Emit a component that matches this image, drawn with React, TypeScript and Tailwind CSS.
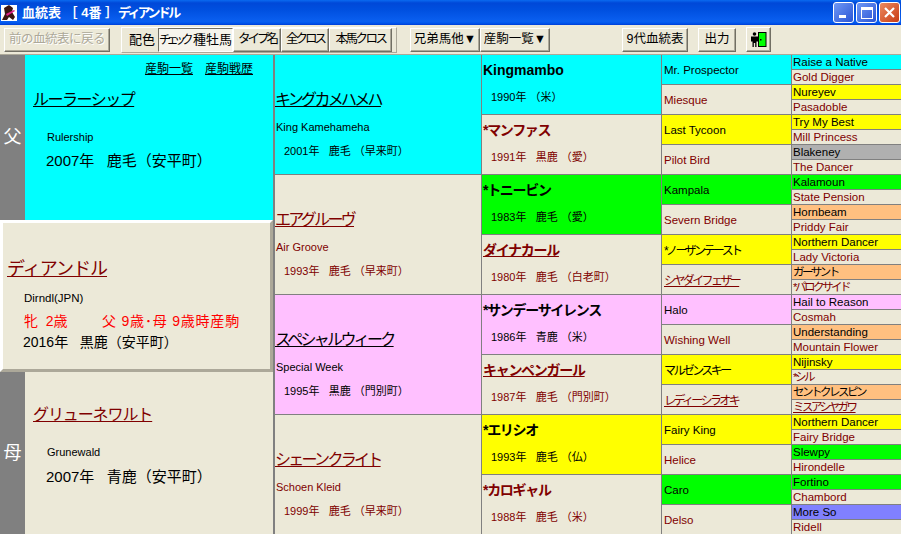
import React from "react";

const font = "font-['Liberation_Sans','Noto_Sans_CJK_JP',sans-serif]";

const bgs: Record<string, string> = {
  c: "bg-[#00ffff]",
  y: "bg-[#ffff00]",
  g: "bg-[#00ff00]",
  p: "bg-[#ffc0ff]",
  o: "bg-[#ffc080]",
  s: "bg-[#b0b0b0]",
  b: "bg-[#8080ff]",
  n: "bg-[#ece9d8]",
};

type Horse = { name: string; bg: string; link?: boolean; sub?: string; data?: string };

const gen2: Horse[] = [
  { name: "キングカメハメハ", bg: "c", link: true, sub: "King Kamehameha", data: "2001年   鹿毛 （早来町）" },
  { name: "エアグルーヴ", bg: "n", link: true, sub: "Air Groove", data: "1993年   鹿毛 （早来町）" },
  { name: "スペシャルウィーク", bg: "p", link: true, sub: "Special Week", data: "1995年   黒鹿 （門別町）" },
  { name: "シェーンクライト", bg: "n", link: true, sub: "Schoen Kleid", data: "1999年   鹿毛 （早来町）" },
];

const gen3: Horse[] = [
  { name: "Kingmambo", bg: "c", data: "1990年 （米）" },
  { name: "*マンファス", bg: "n", data: "1991年   黒鹿 （愛）" },
  { name: "*トニービン", bg: "g", data: "1983年   鹿毛 （愛）" },
  { name: "ダイナカール", bg: "n", link: true, data: "1980年   鹿毛 （白老町）" },
  { name: "*サンデーサイレンス", bg: "p", data: "1986年   青鹿 （米）" },
  { name: "キャンペンガール", bg: "n", link: true, data: "1987年   鹿毛 （門別町）" },
  { name: "*エリシオ", bg: "y", data: "1993年   鹿毛 （仏）" },
  { name: "*カロギャル", bg: "n", data: "1988年   鹿毛 （米）" },
];

const gen4: Horse[] = [
  { name: "Mr. Prospector", bg: "c" },
  { name: "Miesque", bg: "n" },
  { name: "Last Tycoon", bg: "y" },
  { name: "Pilot Bird", bg: "n" },
  { name: "Kampala", bg: "g" },
  { name: "Severn Bridge", bg: "n" },
  { name: "*ノーザンテースト", bg: "y" },
  { name: "シヤダイフェザー", bg: "n", link: true },
  { name: "Halo", bg: "p" },
  { name: "Wishing Well", bg: "n" },
  { name: "マルゼンスキー", bg: "y" },
  { name: "レディーシラオキ", bg: "n", link: true },
  { name: "Fairy King", bg: "y" },
  { name: "Helice", bg: "n" },
  { name: "Caro", bg: "g" },
  { name: "Delso", bg: "n" },
];

const gen5: Horse[] = [
  { name: "Raise a Native", bg: "c" },
  { name: "Gold Digger", bg: "n" },
  { name: "Nureyev", bg: "y" },
  { name: "Pasadoble", bg: "n" },
  { name: "Try My Best", bg: "y" },
  { name: "Mill Princess", bg: "n" },
  { name: "Blakeney", bg: "s" },
  { name: "The Dancer", bg: "n" },
  { name: "Kalamoun", bg: "g" },
  { name: "State Pension", bg: "n" },
  { name: "Hornbeam", bg: "o" },
  { name: "Priddy Fair", bg: "n" },
  { name: "Northern Dancer", bg: "y" },
  { name: "Lady Victoria", bg: "n" },
  { name: "ガーサント", bg: "o" },
  { name: "*パロクサイド", bg: "n" },
  { name: "Hail to Reason", bg: "p" },
  { name: "Cosmah", bg: "n" },
  { name: "Understanding", bg: "o" },
  { name: "Mountain Flower", bg: "n" },
  { name: "Nijinsky", bg: "y" },
  { name: "*シル", bg: "n" },
  { name: "セントクレスピン", bg: "o" },
  { name: "ミスアシヤガワ", bg: "n", link: true },
  { name: "Northern Dancer", bg: "y" },
  { name: "Fairy Bridge", bg: "n" },
  { name: "Slewpy", bg: "g" },
  { name: "Hirondelle", bg: "n" },
  { name: "Fortino", bg: "g" },
  { name: "Chambord", bg: "n" },
  { name: "More So", bg: "b" },
  { name: "Ridell", bg: "n" },
];

function tone(h: Horse): string {
  return h.bg === "n" ? "text-[#800000]" : "text-black";
}

function ink(h: Horse): string {
  return h.link ? `${tone(h)} underline` : tone(h);
}

function isKana(s: string): boolean {
  return /[\u30a0-\u30ff]/.test(s);
}

const btn =
  "h-[24px] flex items-center justify-center whitespace-nowrap text-[12.5px] bg-[#ece9d8] border border-t-white border-l-white border-r-[#716f64] border-b-[#716f64] shadow-[inset_-1px_-1px_0_#aca899]";

function Toolbar() {
  return (
    <div className="h-[30px] flex items-center bg-[#ece9d8] border-b border-[#aca899]">
      <button className={`${btn} w-[106px] ml-[4px] text-[#aca899] tracking-[-0.5px] [text-shadow:1px_1px_0_#ffffff]`}>前の血統表に戻る</button>
      <div className="ml-[11px] h-[26px] w-[276px] flex items-center border border-t-white border-l-white border-r-[#aca899] border-b-[#aca899] pl-[7px]">
        <span className="w-[29px] text-[13px] whitespace-nowrap">配色</span>
        <button className="h-[24px] w-[75px] flex items-center justify-center whitespace-nowrap text-[13px] text-black bg-[#f6f4ec] border border-t-[#716f64] border-l-[#716f64] border-r-white border-b-white">
          <span className="text-[12px] tracking-[-4.5px] mr-[4px]">チェック</span>種牡馬
        </button>
        <button className={`${btn} w-[48px] text-black tracking-[-3px]`}>タイプ名</button>
        <button className={`${btn} w-[48px] text-black tracking-[-3px]`}>全クロス</button>
        <button className={`${btn} w-[63px] text-black tracking-[-2.5px]`}>本馬クロス</button>
      </div>
      <button className={`${btn} w-[70px] ml-[13px] text-black`}>兄弟馬他▼</button>
      <button className={`${btn} w-[70px] text-black`}>産駒一覧▼</button>
      <button className={`${btn} w-[66px] ml-[72px] text-black`}>9代血統表</button>
      <button className={`${btn} w-[38px] ml-[10px] text-black`}>出力</button>
      <button className={`${btn} w-[25px] h-[25px] ml-[10px]`}>
        <svg width="16" height="15" viewBox="0 0 16 15">
          <circle cx="3.5" cy="2" r="1.8" fill="#000" />
          <path d="M0 4.5h7v5H5.5V15h-1.300v-4h-1.400v4H1.500V9.500H0z" fill="#000" />
          <rect x="7.500" y="0.500" width="7.500" height="14" fill="#00ff00" stroke="#000" />
          <rect x="9" y="7" width="1.500" height="1.500" fill="#000" />
        </svg>
      </button>
    </div>
  );
}

function TitleBar() {
  return (
    <div className="h-[25px] flex items-center bg-[linear-gradient(180deg,#0a6af0_0%,#0048d8_12%,#0050e0_40%,#0a5ff0_85%,#0058ee_92%,#003dd7_100%)]">
      <svg className="ml-[1px]" width="16" height="16" viewBox="0 0 16 16">
        <rect width="16" height="16" fill="#ffffff" />
        <path d="M3 3l5-3 4 3-1 4 3 5-2 3-4-3-2 3H1l3-6z" fill="#3a1410" />
        <path d="M5 9l8-4 1 1-8 5z" fill="#e0208a" />
      </svg>
      <span className="ml-[5px] text-[13px] font-bold text-white whitespace-pre">
        血統表 ［ 4番 ］<span className="tracking-[-2.700px]">ディアンドル</span>
      </span>
      <div className="ml-auto mr-[1px] flex gap-[2px]">
        <div className="w-[21px] h-[21px] rounded-[3px] border border-white bg-[linear-gradient(135deg,#6f98f5,#2a55d5)] flex items-end pl-[5px] pb-[4px]">
          <div className="w-[7px] h-[3px] bg-white" />
        </div>
        <div className="w-[21px] h-[21px] rounded-[3px] border border-white bg-[linear-gradient(135deg,#6f98f5,#2a55d5)] flex items-center justify-center">
          <div className="w-[12px] h-[12px] border border-white border-t-[3px]" />
        </div>
        <div className="w-[21px] h-[21px] rounded-[3px] border border-white bg-[linear-gradient(135deg,#ec8a60,#c83c14)] flex items-center justify-center">
          <svg width="13" height="13" viewBox="0 0 13 13">
            <path d="M2 2l9 9M11 2l-9 9" stroke="#fff" strokeWidth="2.200" />
          </svg>
        </div>
      </div>
    </div>
  );
}

function ParentPanel({ label, h, children, bg }: { label: string; h: string; children: React.ReactNode; bg: string }) {
  return (
    <div className={`${h} flex`}>
      <div className="w-[25px] bg-[#808080] flex items-center justify-center text-[18px] text-white">{label}</div>
      <div className={`flex-1 ${bg}`}>{children}</div>
    </div>
  );
}

export default function App() {
  return (
    <div className={`w-[901px] h-[534px] overflow-hidden bg-[#ece9d8] ${font}`}>
      <TitleBar />
      <Toolbar />
      <div className="flex">
        {/* 本馬と両親 */}
        <div className="w-[275px] border-r-2 border-[#808080] flex flex-col">
          <ParentPanel label="父" h="h-[165px]" bg="bg-[#00ffff]">
            <div className="flex justify-end gap-[12px] pr-[20px] pt-[7px] text-[12px] leading-[14px] underline text-black">
              <span>産駒一覧</span>
              <span>産駒戦歴</span>
            </div>
            <div className="pl-[8px] mt-[13px] text-[16px] leading-[22px] underline text-black tracking-[-1.500px]">ルーラーシップ</div>
            <div className="pl-[22px] mt-[19px] text-[11px] leading-[14px] text-black">Rulership</div>
            <div className="pl-[21px] mt-[7px] text-[15px] leading-[20px] text-black whitespace-pre">2007年   鹿毛（安平町）</div>
          </ParentPanel>
          <div className="h-[152px] bg-[#ece9d8] border-[3px] border-t-white border-l-white border-r-[#aca899] border-b-[#aca899] pl-[4px]">
            <div className="mt-[33px] text-[18px] leading-[26px] underline text-[#800000] tracking-[-1px]">ディアンドル</div>
            <div className="mt-[8px] pl-[17px] text-[11.5px] leading-[16px] text-black">Dirndl(JPN)</div>
            <div className="mt-[6px] pl-[17px] flex text-[14px] leading-[18px] text-[#ff0000] whitespace-pre">
              <span className="w-[78px]">牝  2歳</span>
              <span className="tracking-[0.800px]">父 9歳･母 9歳時産駒</span>
            </div>
            <div className="mt-[2px] pl-[16px] text-[14px] leading-[20px] text-black whitespace-pre">2016年   黒鹿（安平町）</div>
          </div>
          <ParentPanel label="母" h="h-[162px]" bg="bg-[#ece9d8]">
            <div className="pl-[8px] mt-[32px] text-[16px] leading-[22px] underline text-[#800000] tracking-[-1.100px]">グリューネワルト</div>
            <div className="pl-[22px] mt-[19px] text-[11px] leading-[14px] text-black">Grunewald</div>
            <div className="pl-[21px] mt-[8px] text-[15px] leading-[20px] text-black whitespace-pre">2007年   青鹿（安平町）</div>
          </ParentPanel>
        </div>

        {/* 2代目から5代目 */}
        <div className="flex-1 flex">
          <div className="w-[206px]">
            {gen2.map((h) => (
              <div key={h.name} className={`h-[120px] border-b border-[#808080] ${bgs[h.bg]}`}>
                <div className={`pt-[34px] text-[16px] leading-[22px] tracking-[-2.700px] ${ink(h)}`}>{h.name}</div>
                <div className={`mt-[9px] pl-[1px] text-[11px] leading-[14px] ${tone(h)}`}>{h.sub}</div>
                <div className={`mt-[10px] pl-[9px] text-[11px] leading-[14px] whitespace-pre ${tone(h)}`}>{h.data}</div>
              </div>
            ))}
          </div>
          <div className="w-[180px]">
            {gen3.map((h) => (
              <div key={h.name} className={`h-[60px] border-l border-b border-[#808080] pl-[1px] ${bgs[h.bg]}`}>
                <div className={`pt-[5px] text-[14px] font-bold leading-[20px] ${isKana(h.name) ? "tracking-[-1.300px]" : ""} ${ink(h)}`}>{h.name}</div>
                <div className={`mt-[10px] pl-[8px] text-[11px] leading-[14px] whitespace-pre ${tone(h)}`}>{h.data}</div>
              </div>
            ))}
          </div>
          <div className="w-[130px]">
            {gen4.map((h) => (
              <div key={h.name} className={`h-[30px] flex items-center border-l border-b border-[#808080] pl-[2px] pt-[2px] ${isKana(h.name) ? "text-[12px] tracking-[-2.600px]" : "text-[11.5px]"} ${bgs[h.bg]} ${ink(h)}`}>
                {h.name}
              </div>
            ))}
          </div>
          <div className="w-[110px]">
            {gen5.map((h, i) => (
              <div key={i} className={`h-[15px] flex items-center border-l border-b border-[#808080] pl-[1px] leading-[14px] ${isKana(h.name) ? "text-[11.5px] tracking-[-2.500px]" : "text-[11.5px]"} ${bgs[h.bg]} ${ink(h)}`}>
                {h.name}
              </div>
            ))}
          </div>
        </div>
      </div>
    </div>
  );
}
